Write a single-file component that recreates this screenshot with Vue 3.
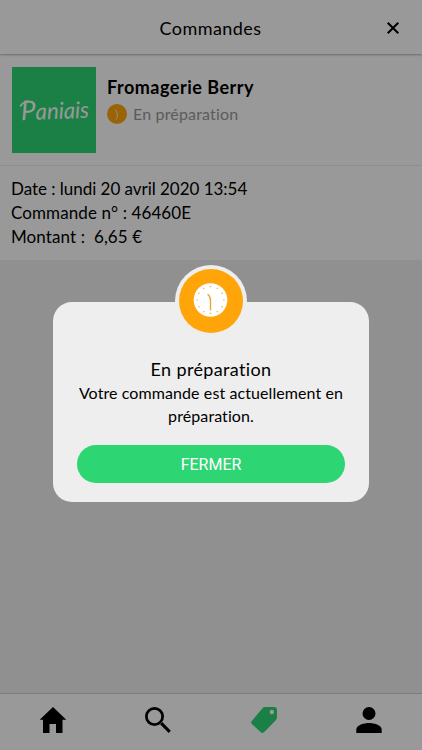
<template>
  <div class="screen">
    <header class="header">
      <span></span>
      <h1>Commandes</h1>
      <button class="close-btn" aria-label="Retour">
        <svg width="12" height="12" viewBox="0 0 12 12">
          <path d="M.7.7l10.6 10.6M11.3.7L.7 11.3" fill="none" stroke="#000" stroke-width="2" />
        </svg>
      </button>
    </header>

    <main class="content">
      <section class="shop">
        <svg class="logo" width="84" height="86" viewBox="0 0 84 86">
          <rect width="84" height="86" fill="#2ed573" />
          <text x="9" y="52" textLength="68" lengthAdjust="spacingAndGlyphs" transform="rotate(-2 42 45)">
            <tspan class="initial">P</tspan>aniais
          </text>
          <path d="M8.5 39q2-3.5 7-5" fill="none" stroke="#fff" stroke-width="1.6" stroke-linecap="round" />
        </svg>
        <div class="shop-text">
          <h2>{{ order.shop }}</h2>
          <div class="status">
            <svg width="20" height="20" viewBox="0 0 20 20">
              <circle cx="10" cy="10" r="10" fill="#ffa50a" />
              <path d="M8.2 5.5q2.2 2.5 2.2 5.5q0 2.5-1 4.5" fill="none" stroke="#f8ecd0" stroke-width="1" />
            </svg>
            <span>{{ order.status }}</span>
          </div>
        </div>
      </section>

      <section class="details">
        <p v-for="line in order.details" :key="line.name" :class="line.name">{{ line.text }}</p>
      </section>
    </main>

    <nav class="tabs">
      <button v-for="tab in tabs" :key="tab.name" :class="['tab', tab.name]" :aria-label="tab.name">
        <svg width="28" height="28" viewBox="-1 -1 28 28">
          <path :d="tab.path" fill="currentColor" />
        </svg>
      </button>
    </nav>

    <!-- Fenêtre de statut -->
    <div v-if="showModal" class="overlay">
      <div class="modal">
        <div class="badge">
          <svg width="64" height="64" viewBox="0 0 64 64">
            <circle cx="32" cy="32" r="32" fill="#ffa50a" />
            <circle cx="31.5" cy="31" r="16.8" fill="#fff" />
            <circle
              v-for="n in 12"
              :key="n"
              cx="31.5"
              cy="17.6"
              r="0.8"
              fill="#f3b95c"
              :transform="`rotate(${n * 30} 31.5 31)`"
            />
            <path d="M28.6 25.3Q31.5 27.5 31.5 31.5V41.4" fill="none" stroke="#eba63a" stroke-width="1.4" />
          </svg>
        </div>
        <h3>{{ order.status }}</h3>
        <p class="message">Votre commande est actuellement en<br />préparation.</p>
        <button class="confirm" @click="showModal = false">FERMER</button>
      </div>
    </div>
  </div>
</template>

<script setup>
import { ref } from 'vue';

const showModal = ref(true);

const order = {
  shop: 'Fromagerie Berry',
  status: 'En préparation',
  details: [
    { name: 'date', text: 'Date : lundi 20 avril 2020 13:54' },
    { name: 'number', text: 'Commande n° : 46460E' },
    { name: 'amount', text: 'Montant :  6,65 €' },
  ],
};

const tabs = [
  { name: 'home', path: 'M13 0L26.3 12.7H22.5V26H16V17H9.5V26H3V12.7H-.3z' },
  {
    name: 'search',
    path: 'M9.5 0a9.5 9.5 0 1 0 0 19 9.5 9.5 0 0 0 0-19zm0 2.7a6.8 6.8 0 1 1 0 13.6 6.8 6.8 0 0 1 0-13.6zM14.8 17L17 14.8 25.8 23.8 23.7 26z',
  },
  {
    name: 'orders',
    path: 'M14 0H23Q26 0 26 3V10.3Q26 12 24.8 13.2L13 25.2Q11.5 26.8 9.8 25.3L.8 17Q-.5 15.5.8 14L11.5 1.2Q12.5 0 14 0zM20.8 2.8a2.2 2.2 0 1 0 0 4.4 2.2 2.2 0 0 0 0-4.4z',
  },
  {
    name: 'account',
    path: 'M13 0a6.5 6.5 0 1 0 0 13 6.5 6.5 0 0 0 0-13zM13 16C8.5 16 .3 18 .3 22.5V26H25.7V22.5C25.7 18 17.5 16 13 16z',
  },
];
</script>

<style>
body {
  margin: 0;
}
</style>

<style scoped>
.screen {
  position: relative;
  display: flex;
  flex-direction: column;
  height: 750px;
  overflow: hidden;
  background: #f0f0f0;
  color: #000;
  font-family: Lato, "Liberation Sans", sans-serif;
  font-variant-ligatures: none;
}

h1,
h2,
h3,
p {
  margin: 0;
  font-weight: 400;
}

button {
  padding: 0;
  border: none;
  background: none;
  color: inherit;
  font-family: inherit;
}

/* Header */
.header {
  z-index: 1;
  box-sizing: border-box;
  display: grid;
  grid-template-columns: 58px 1fr 58px;
  align-items: center;
  height: 54px;
  padding-top: 1px;
  background: #fff;
  box-shadow: 0 1px 2px rgba(0, 0, 0, 0.3);
}

.header h1 {
  padding-right: 1px;
  text-align: center;
  font-size: 18px;
  letter-spacing: 0.45px;
}

.close-btn {
  display: flex;
  justify-content: center;
}

/* Commande */
.content {
  flex: 1;
}

.shop {
  box-sizing: border-box;
  display: flex;
  gap: 11px;
  height: 112px;
  padding: 13px 12px;
  border-bottom: 1px solid #ececec;
  background: #fff;
}

.logo text {
  fill: #fff;
  font-size: 23px;
  font-style: italic;
}

.logo .initial {
  font-size: 27px;
}

.shop-text {
  padding-top: 8px;
}

.shop-text h2 {
  font-size: 18px;
  line-height: 24px;
  font-weight: 700;
  letter-spacing: 0.5px;
}

.status {
  display: flex;
  align-items: center;
  gap: 6px;
  margin-top: 5px;
  color: #999;
  font-size: 16px;
  line-height: 20px;
  letter-spacing: 0.17px;
}

.details {
  box-sizing: border-box;
  height: 94px;
  padding: 11px;
  background: #fff;
  font-size: 17px;
  line-height: 24px;
  white-space: pre;
}

.date {
  letter-spacing: -0.03px;
}

.number,
.amount {
  letter-spacing: 0.1px;
}

/* Navigation */
.tabs {
  box-sizing: border-box;
  display: grid;
  grid-template-columns: repeat(4, 1fr);
  height: 57px;
  padding-top: 12px;
  border-top: 1px solid #d0d0d0;
  background: #fff;
}

.tab {
  display: flex;
  justify-content: center;
  align-items: flex-start;
}

.tab.orders {
  color: #2ed573;
}

/* Modal */
.overlay {
  position: absolute;
  inset: 0;
  z-index: 2;
  display: flex;
  justify-content: center;
  align-items: flex-start;
  padding-top: 302px;
  background: rgba(0, 0, 0, 0.4);
}

.modal {
  position: relative;
  box-sizing: border-box;
  width: 316px;
  height: 200px;
  padding: 55px 24px 0;
  border-radius: 19px;
  background: #eee;
  text-align: center;
}

.badge {
  position: absolute;
  top: -37px;
  left: 122px;
  display: flex;
  padding: 4px;
  border-radius: 50%;
  background: #eee;
}

.modal h3 {
  font-size: 18px;
  line-height: 24px;
  letter-spacing: 0.35px;
}

.message {
  font-size: 16px;
  line-height: 23px;
  letter-spacing: 0.09px;
  white-space: nowrap;
}

.confirm {
  width: 100%;
  height: 38px;
  margin-top: 18px;
  border-radius: 19px;
  background: #2ed573;
  color: #fff;
  font-family: Roboto, "Liberation Sans", sans-serif;
  font-size: 16px;
}
</style>
